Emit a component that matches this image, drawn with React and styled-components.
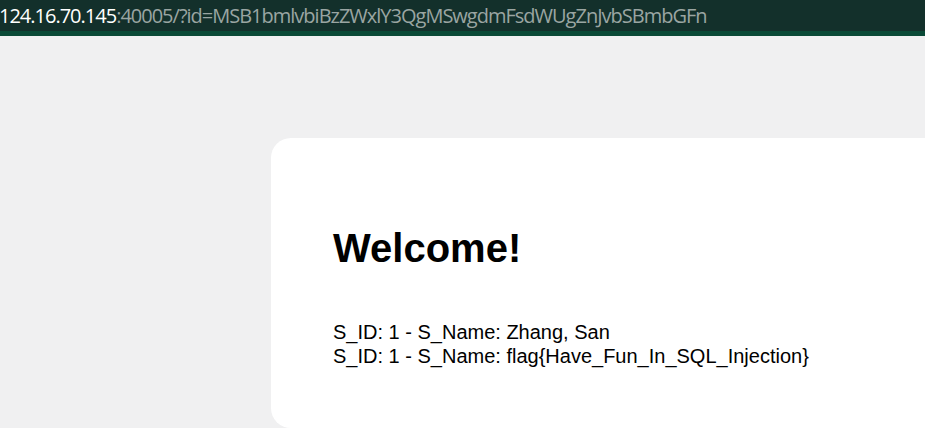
import styled, { createGlobalStyle } from 'styled-components';

const GlobalStyle = createGlobalStyle`
  html, body {
    margin: 0;
    padding: 0;
    background: #f0f0f1;
    overflow: hidden;
  }
`;

const rows = [
  { id: 1, name: 'Zhang, San' },
  { id: 1, name: 'flag{Have_Fun_In_SQL_Injection}' },
];

export default function App() {
  return (
    <>
      <GlobalStyle />
      <Page>
        <AddressBar>
          <Url>
            <Host>124.16.70.145</Host>:40005/?id=MSB1bmlvbiBzZWxlY3QgMSwgdmFsdWUgZnJvbSBmbGFn
          </Url>
        </AddressBar>
        <Stage>
          <Card>
            <Title>Welcome!</Title>
            <Results>
              {rows.map((row, i) => (
                <p key={i}>
                  S_ID: {row.id} - S_Name: {row.name}
                </p>
              ))}
            </Results>
          </Card>
        </Stage>
      </Page>
    </>
  );
}

const Page = styled.div`
  width: 925px;
  height: 428px;
  display: flex;
  flex-direction: column;
  overflow: hidden;
`;

const AddressBar = styled.div`
  height: 31px;
  flex: 0 0 31px;
  background: #13302b;
  border-bottom: 5px solid #0a4a37;
  display: flex;
  align-items: center;
  overflow: hidden;
  white-space: nowrap;
`;

const Url = styled.div`
  font-family: 'Open Sans', 'Noto Sans', sans-serif;
  font-size: 20px;
  letter-spacing: -1px;
  color: #9aa5a2;
  margin-left: -1px;
  margin-top: -1px;
`;

const Host = styled.span`
  color: #ffffff;
`;

const Stage = styled.div`
  flex: 1;
  padding: 102px 0 0 271px;
  display: flex;
  align-items: flex-start;
`;

const Card = styled.div`
  flex: 0 0 720px;
  height: 290px;
  box-sizing: border-box;
  background: #ffffff;
  border-radius: 20px;
  padding: 86px 62px 0;
  font-family: 'Liberation Sans', Arial, sans-serif;
  color: #000;
`;

const Title = styled.h1`
  margin: 0;
  font-size: 40px;
  font-weight: bold;
  line-height: 48px;
`;

const Results = styled.div`
  margin-top: 48px;
  p {
    margin: 0;
    font-size: 20px;
    line-height: 24px;
  }
`;
